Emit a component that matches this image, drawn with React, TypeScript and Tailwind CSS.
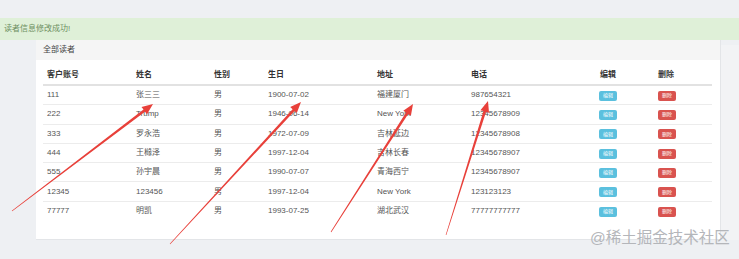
import React from "react";

const rows = [
  ["111", "张三三", "男", "1900-07-02", "福建厦门", "987654321"],
  ["222", "Trump", "男", "1946-06-14", "New York", "12345678909"],
  ["333", "罗永浩", "男", "1972-07-09", "吉林延边", "12345678908"],
  ["444", "王橼泽", "男", "1997-12-04", "吉林长春", "12345678907"],
  ["555", "孙宇晨", "男", "1990-07-07", "青海西宁", "12345678907"],
  ["12345", "123456", "男", "1997-12-04", "New York", "123123123"],
  ["77777", "明凯", "男", "1993-07-25", "湖北武汉", "77777777777"],
];

const headers = ["客户账号", "姓名", "性别", "生日", "地址", "电话", "编辑", "删除"];
const cols = "grid grid-cols-[89px_78px_54px_109px_94px_129px_58px_58px]";

// arrow: tapered shaft from tail to head, filled triangle at the head
function arrow(x1: number, y1: number, x2: number, y2: number) {
  const dx = x2 - x1;
  const dy = y2 - y1;
  const len = Math.hypot(dx, dy);
  const ux = dx / len;
  const uy = dy / len;
  const nx = -uy;
  const ny = ux;
  const headLen = 11;
  const headW = 4.5;
  const bx = x2 - ux * headLen;
  const by = y2 - uy * headLen;
  const t = 0.3;
  const s = 1.3;
  const pts = [
    [x1 + nx * t, y1 + ny * t],
    [bx + nx * s, by + ny * s],
    [bx + nx * headW, by + ny * headW],
    [x2, y2],
    [bx - nx * headW, by - ny * headW],
    [bx - nx * s, by - ny * s],
    [x1 - nx * t, y1 - ny * t],
  ];
  return pts.map((p) => p.map((v) => v.toFixed(1)).join(",")).join(" ");
}

export default function App() {
  return (
    <div
      className="relative w-[739px] h-[259px] overflow-hidden bg-[#eef0f3]"
      style={{ fontFamily: '"Liberation Sans", "Noto Sans CJK SC", sans-serif' }}
    >
      <div className="h-[18px]" />
      <div className="h-[22px] bg-[#dff0d8] flex items-center pl-[4px] text-[8px] text-[#6d8f61]">
        读者信息修改成功!
      </div>
      <div className="flex">
        <div className="w-[36px]" />
        <div className="w-[685px] h-[200px] bg-white border-r border-b border-[#e3e5e8]">
          <div className="h-[20px] bg-[#f5f5f5] flex items-center pl-[7px] text-[8px] text-[#444]">
            全部读者
          </div>
          <div className="pl-[7px] pt-[6px]">
            <div className={`${cols} h-[20px] items-center border-b-2 border-[#e2e2e2] text-[8px] font-bold text-[#333] w-[669px]`}>
              {headers.map((h) => (
                <div key={h} className="pl-[4px]">{h}</div>
              ))}
            </div>
            {rows.map((r, i) => (
              <div
                key={i}
                className={`${cols} h-[19.3px] items-center text-[8px] text-[#555] w-[669px] ${i < rows.length - 1 ? "border-b border-[#ececec]" : ""}`}
              >
                {r.map((c, j) => (
                  <div key={j} className="pl-[4px] whitespace-nowrap">{c}</div>
                ))}
                <div className="pl-[3px]">
                  <span className="inline-flex items-center justify-center w-[18px] h-[10px] rounded-[2px] bg-[#5bc0de] text-white text-[5px]">编辑</span>
                </div>
                <div className="pl-[4px]">
                  <span className="inline-flex items-center justify-center w-[18px] h-[10px] rounded-[2px] bg-[#d9534f] text-white text-[5px]">删除</span>
                </div>
              </div>
            ))}
          </div>
        </div>
        <div className="flex-1 mt-[5px] bg-[#f2f3f5]" />
      </div>

      <svg className="absolute inset-0 pointer-events-none" width="739" height="259">
        <polygon points={arrow(12, 211, 153, 104)} fill="#e8403a" />
        <polygon points={arrow(170, 244, 301, 102)} fill="#e8403a" />
        <polygon points={arrow(331, 232, 413, 104)} fill="#e8403a" />
        <polygon points={arrow(446, 235, 488, 101)} fill="#e8403a" />
      </svg>

      <div className="absolute left-[590px] top-[228px] text-[15.5px] leading-[20px] text-[#b4b6ba] whitespace-nowrap">
        @稀土掘金技术社区
      </div>
    </div>
  );
}
